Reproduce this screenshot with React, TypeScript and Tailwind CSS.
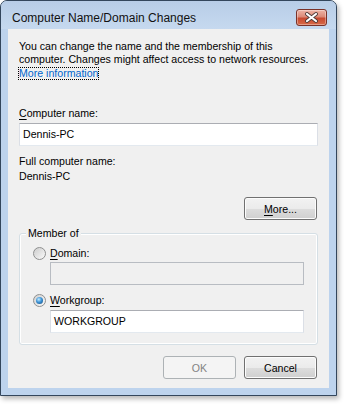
import React from 'react'

// Windows 7 style "Computer Name/Domain Changes" dialog

function Button({ children, disabled }: { children: React.ReactNode; disabled?: boolean }) {
  return (
    <button
      disabled={disabled}
      className={
        disabled
          ? 'w-[73px] h-[23px] rounded-[3px] border border-[#adb2b5] bg-[#f4f4f4] text-[#838383] text-[10.6px] leading-none pt-[1px]'
          : 'w-[73px] h-[23px] rounded-[3px] border border-[#707070] bg-[linear-gradient(#f2f2f2_0%,#ebebeb_50%,#dddddd_51%,#cfcfcf_100%)] shadow-[inset_0_0_0_1px_#fcfcfc] text-black text-[10.6px] leading-none pt-[1px]'
      }
    >
      {children}
    </button>
  )
}

function Radio({ checked }: { checked?: boolean }) {
  return (
    <span className="flex w-[13px] h-[13px] shrink-0 items-center justify-center rounded-full border border-[#8e8f8f] bg-[linear-gradient(135deg,#cfcfcf,#fafafa)]">
      {checked ? (
        <span className="w-[7px] h-[7px] rounded-full bg-[radial-gradient(circle_at_40%_35%,#c4ecff_0%,#3d93d6_45%,#0e4578_100%)]" />
      ) : (
        <span className="w-[9px] h-[9px] rounded-full bg-[linear-gradient(135deg,#d0d0d0,#f6f6f6)]" />
      )}
    </span>
  )
}

function TextBox({ value, disabled, wide }: { value?: string; disabled?: boolean; wide?: boolean }) {
  return (
    <div
      className={
        (wide ? 'w-[299px] ' : 'w-[254px] ') +
        (disabled
          ? 'h-[23px] flex items-center pl-[3px] border border-[#b8bcc2] bg-[#f0f0f0]'
          : 'h-[23px] flex items-center pl-[3px] border border-[#dbdfe6] border-t-[#abadb3] border-b-[#e3e9ef] bg-white')
      }
    >
      {value}
    </div>
  )
}

export default function App() {
  return (
    <div className="w-[344px] h-[404px] bg-white text-black font-['Liberation_Sans',Arial,sans-serif]">
      <div className="w-[337px] h-[396px] flex flex-col rounded-t-[7px] border border-[#33465c] bg-[#bdd3ed] shadow-[2px_3px_5px_rgba(0,0,0,0.28)] overflow-hidden">
        {/* Title bar */}
        <div className="h-[28px] shrink-0 flex items-start justify-between bg-[linear-gradient(#b8cde7,#c6d9ef)]">
          <span className="pl-[11px] pt-[10px] text-[12px] leading-[14px] text-[#111]">Computer Name/Domain Changes</span>
          <button className="mt-[8px] mr-[9px] w-[31px] h-[17px] flex items-center justify-center rounded-[3px] border border-[#7a3229] bg-[linear-gradient(#eeb4a6_0%,#dc8a78_45%,#c84a31_55%,#d76a48_100%)] shadow-[inset_0_0_0_1px_rgba(255,255,255,0.35)]">
            <svg width="15" height="11" viewBox="0 0 15 11">
              <path d="M3 2 L12 9 M12 2 L3 9" stroke="#4a3a38" strokeWidth="3.8" strokeLinecap="round" />
              <path d="M3 2 L12 9 M12 2 L3 9" stroke="#ffffff" strokeWidth="2.2" strokeLinecap="round" />
            </svg>
          </button>
        </div>

        {/* Client area */}
        <div className="flex-1 flex px-[7px] pb-[7px]">
          <div className="flex-1 flex flex-col bg-[#f0f0f0] px-[11px] pt-[11px] text-[10.6px] leading-[13px]">
            <p>
              You can change the name and the membership of this
              <br />
              computer. Changes might affect access to network resources.
              <br />
              <span className="relative top-[1px] inline-block leading-[11px] text-[#0066cc] outline-1 outline-dotted outline-black">
                More information
              </span>
            </p>

            <div className="mt-[28px]">
              <span className="underline underline-offset-2">C</span>omputer name:
            </div>
            <div className="mt-[3px]">
              <TextBox value="Dennis-PC" wide />
            </div>

            <div className="mt-[9px]">Full computer name:</div>
            <div className="mt-[2px]">Dennis-PC</div>

            <div className="mt-[14px] flex justify-end pr-[1px]">
              <Button>
                <span className="underline underline-offset-2">M</span>ore...
              </Button>
            </div>

            {/* Member of group */}
            <div className="relative mt-[13px] h-[112px] rounded-[3px] border border-[#d5dfe5] shadow-[inset_0_0_0_1px_#ffffff] pl-[13px] pt-[13px]">
              <span className="absolute left-[6px] top-[-7px] bg-[#f0f0f0] px-[2px]">Member of</span>
              <div className="flex items-center gap-[4px] h-[13px]">
                <Radio />
                <span>
                  <span className="underline underline-offset-2">D</span>omain:
                </span>
              </div>
              <div className="mt-[2px] pl-[17px]">
                <TextBox disabled />
              </div>
              <div className="mt-[9px] flex items-center gap-[4px] h-[13px]">
                <Radio checked />
                <span>
                  <span className="underline underline-offset-2">W</span>orkgroup:
                </span>
              </div>
              <div className="mt-[3px] pl-[17px]">
                <TextBox value="WORKGROUP" />
              </div>
            </div>

            <div className="mt-[11px] flex justify-end gap-[8px] pr-[1px]">
              <Button disabled>OK</Button>
              <Button>Cancel</Button>
            </div>
          </div>
        </div>
      </div>
    </div>
  )
}
